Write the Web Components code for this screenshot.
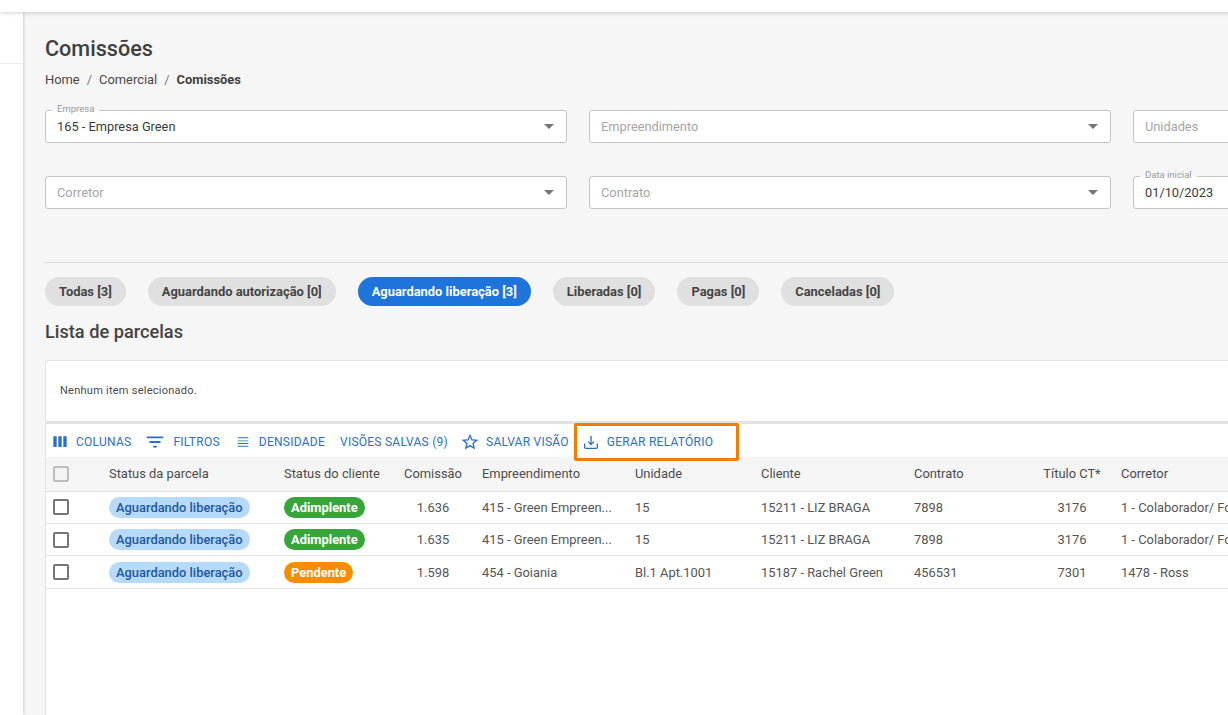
<!DOCTYPE html>
<html lang="pt-BR">
<head>
<meta charset="UTF-8">
<title>Comissões</title>
<style>
  html, body { margin: 0; height: 100%; overflow: hidden; background: #fff; font-family: Roboto, "Liberation Sans", sans-serif; color: #3f3f3f; }
  grid-row .c { width: 58px; text-align: center; }
</style>
</head>
<body>
<app-shell>
  <page-header title="Comissões"></page-header>
  <filter-grid>
    <form-field label="Empresa" value="165 - Empresa Green" arrow></form-field>
    <form-field placeholder="Empreendimento" arrow></form-field>
    <form-field placeholder="Unidades"></form-field>
    <form-field placeholder="Corretor" arrow></form-field>
    <form-field placeholder="Contrato" arrow></form-field>
    <form-field label="Data inicial" value="01/10/2023"></form-field>
  </filter-grid>
  <status-tabs>
    <status-chip>Todas [3]</status-chip>
    <status-chip>Aguardando autorização [0]</status-chip>
    <status-chip active>Aguardando liberação [3]</status-chip>
    <status-chip>Liberadas [0]</status-chip>
    <status-chip>Pagas [0]</status-chip>
    <status-chip>Canceladas [0]</status-chip>
  </status-tabs>
  <list-panel title="Lista de parcelas">
    <grid-toolbar slot="toolbar">
      <tool-button icon="columns">COLUNAS</tool-button>
      <tool-button icon="filter">FILTROS</tool-button>
      <tool-button icon="density" class="wider">DENSIDADE</tool-button>
      <tool-button class="plain">VISÕES SALVAS (9)</tool-button>
      <tool-button icon="star" class="tight">SALVAR VISÃO</tool-button>
      <tool-button icon="download" highlight>GERAR RELATÓRIO</tool-button>
    </grid-toolbar>
    <grid-row header>
      <span>Status da parcela</span><span>Status do cliente</span><span class="c">Comissão</span><span>Empreendimento</span><span>Unidade</span><span>Cliente</span><span>Contrato</span><span class="c">Título CT*</span><span>Corretor</span>
    </grid-row>
    <grid-row>
      <status-pill kind="info">Aguardando liberação</status-pill><status-pill kind="ok">Adimplente</status-pill><span class="c">1.636</span><span>415 - Green Empreen...</span><span>15</span><span>15211 - LIZ BRAGA</span><span>7898</span><span class="c">3176</span><span>1 - Colaborador/ Fornecedor</span>
    </grid-row>
    <grid-row>
      <status-pill kind="info">Aguardando liberação</status-pill><status-pill kind="ok">Adimplente</status-pill><span class="c">1.635</span><span>415 - Green Empreen...</span><span>15</span><span>15211 - LIZ BRAGA</span><span>7898</span><span class="c">3176</span><span>1 - Colaborador/ Fornecedor</span>
    </grid-row>
    <grid-row>
      <status-pill kind="info">Aguardando liberação</status-pill><status-pill kind="warn">Pendente</status-pill><span class="c">1.598</span><span>454 - Goiania</span><span>Bl.1 Apt.1001</span><span>15187 - Rachel Green</span><span>456531</span><span class="c">7301</span><span>1478 - Ross</span>
    </grid-row>
  </list-panel>
</app-shell>

<script>
  // size and gap to the label differ per icon
  const icons = {
    columns: { size: 20, gap: 6, d: '<path d="M10 18h4V5h-4v13zm-6 0h4V5H4v13zM16 5v13h4V5h-4z" fill="currentColor"/>' },
    filter: { size: 22, gap: 7, d: '<path d="M10 18h4v-2h-4v2zM3 6v2h18V6H3zm3 7h12v-2H6v2z" fill="currentColor"/>' },
    density: { size: 16, gap: 8, d: '<path d="M4 15h16v-1.4H4V15zm0 4h16v-1.4H4V19zm0-8h16V9.6H4V11zm0-6v1.4h16V5H4z" fill="currentColor"/>' },
    star: { size: 20, gap: 6, d: '<path d="M22 9.24l-7.19-.62L12 2 9.19 8.63 2 9.24l5.46 4.73L5.82 21 12 17.27 18.18 21l-1.63-7.03L22 9.24zM12 15.4l-3.76 2.27 1-4.28-3.32-2.88 4.38-.38L12 6.1l1.71 4.04 4.38.38-3.32 2.88 1 4.28L12 15.4z" fill="currentColor"/>' },
    download: { size: 18, gap: 7, d: '<path d="M3.5 14v5a1.5 1.5 0 0 0 1.5 1.5h14a1.5 1.5 0 0 0 1.5-1.5v-5M12 4v11M8 11.5l4 4 4-4" fill="none" stroke="currentColor" stroke-width="1.8"/>' }
  };

  function define(name, css, html) {
    class El extends HTMLElement {
      constructor() {
        super();
        this.attachShadow({ mode: 'open' });
      }
      connectedCallback() {
        this.shadowRoot.innerHTML = `<style>${css}</style>` + (typeof html === 'function' ? html(this) : html);
      }
    }
    customElements.define(name, El);
  }

  define('app-shell', `
    :host { display: grid; grid-template-columns: 23px 1fr; grid-template-rows: 12px 1fr; height: 715px; overflow: hidden; }
    .top { grid-column: 1 / 3; background: #fff; box-shadow: 0 1px 4px rgba(0,0,0,.18); position: relative; z-index: 2; }
    .side { background: #fff; box-shadow: 1px 0 3px rgba(0,0,0,.14); position: relative; z-index: 1; }
    .side div { height: 51px; border-bottom: 1px solid #ececec; }
    main { background: #f6f6f6; padding: 23px 0 0 22px; overflow: hidden; width: 1300px; }
  `, `<div class="top"></div><div class="side"><div></div></div><main><slot></slot></main>`);

  define('page-header', `
    :host { display: block; }
    h1 { margin: 0; font-size: 21.6px; line-height: 28px; font-weight: 500; color: #3f3f3f; }
    nav { margin-top: 9px; font-size: 12.9px; line-height: 16px; display: flex; gap: 7px; color: #484848; }
    b { font-weight: 700; color: #3f3f3f; }
    i { font-style: normal; color: #777; }
  `, el => `<h1>${el.getAttribute('title')}</h1>
    <nav><span>Home</span><i>/</i><span>Comercial</span><i>/</i><b>${el.getAttribute('title')}</b></nav>`);

  define('filter-grid', `
    :host { display: grid; grid-template-columns: repeat(3, 522px); column-gap: 22px; row-gap: 33px; margin-top: 22px; }
  `, `<slot></slot>`);

  define('form-field', `
    :host { display: flex; align-items: center; justify-content: space-between; position: relative; height: 33px; box-sizing: border-box; padding: 0 12px 0 11px; background: #fff; border: 1px solid #c4c4c4; border-radius: 3px; font-size: 12.8px; }
    .v { color: #3c3c3c; }
    .p { color: #a5a5a5; }
    label { position: absolute; left: 6px; top: -8px; padding: 0 5px; font-size: 9.5px; line-height: 11px; color: #9a9a9a; background: linear-gradient(#f6f6f6 7px, #fff 7px); }
    .arrow { width: 0; height: 0; border: 5px solid transparent; border-top-color: #757575; border-bottom: 0; }
  `, el => `${el.hasAttribute('label') ? `<label>${el.getAttribute('label')}</label>` : ''}
    ${el.hasAttribute('value') ? `<span class="v">${el.getAttribute('value')}</span>` : `<span class="p">${el.getAttribute('placeholder')}</span>`}
    ${el.hasAttribute('arrow') ? '<span class="arrow"></span>' : ''}`);

  define('status-tabs', `
    :host { display: flex; gap: 22px; width: 1300px; margin-top: 53px; padding-top: 14px; border-top: 1px solid #dcdcdc; }
  `, `<slot></slot>`);

  define('status-chip', `
    :host { display: block; height: 29px; line-height: 29px; padding: 0 14px; border-radius: 15px; background: #e0e0e0; color: #444; font-size: 12.92px; font-weight: 700; white-space: nowrap; }
    :host([active]) { background: #1f74db; color: #fff; }
  `, `<slot></slot>`);

  define('list-panel', `
    :host { display: block; }
    h2 { margin: 14px 0 16px; font-size: 18.2px; line-height: 24px; font-weight: 500; color: #444; }
    .notice { height: 62px; box-sizing: border-box; background: #fff; border: 1px solid #e2e2e2; border-right: 0; border-radius: 3px 0 0 3px; padding-left: 14px; font-size: 11px; letter-spacing: .25px; line-height: 59px; color: #4a4a4a; }
    .body { background: #fff; border-left: 1px solid #e2e2e2; border-top: 2px solid #e2e2e2; height: 292px; }
  `, el => `<h2>${el.getAttribute('title')}</h2>
    <div class="notice">Nenhum item selecionado.</div>
    <div class="body"><slot name="toolbar"></slot><slot></slot></div>`);

  define('grid-toolbar', `
    :host { display: flex; align-items: center; box-sizing: border-box; height: 33px; padding: 2px 0 0 4px; gap: 13px; }
    ::slotted(.wider) { margin-left: 2px; }
    ::slotted(.plain) { margin-left: 2px; }
    ::slotted(.tight) { margin-left: -1px; }
  `, `<slot></slot>`);

  define('tool-button', `
    :host { display: flex; align-items: center; gap: var(--gap, 0); position: relative; color: #2b6fcc; font-size: 12px; letter-spacing: .25px; white-space: nowrap; }
    svg { display: block; flex: none; }
    .hl { position: absolute; left: -8px; top: calc(50% - 18.5px); width: 165px; height: 38px; box-sizing: border-box; border: 3px solid #f57c00; border-radius: 2px; }
  `, el => {
    const icon = icons[el.getAttribute('icon')];
    if (icon) el.style.setProperty('--gap', icon.gap + 'px');
    return `${icon ? `<svg viewBox="0 0 24 24" width="${icon.size}" height="${icon.size}">${icon.d}</svg>` : ''}<slot></slot>${el.hasAttribute('highlight') ? '<span class="hl"></span>' : ''}`;
  });

  define('check-box', `
    :host { display: block; width: 16px; height: 16px; box-sizing: border-box; border: 2px solid #757575; border-radius: 2px; background: #fff; }
    :host([muted]) { border-color: #bdbdbd; background: #f4f4f4; }
  `, ``);

  define('status-pill', `
    :host { display: inline-block; justify-self: start; height: 21px; line-height: 21px; padding: 0 7px; border-radius: 11px; font-size: 12.9px; font-weight: 500; white-space: nowrap; }
    :host([kind=info]) { background: #b6dafc; color: #1f56a0; }
    :host([kind=ok]) { background: #38a53b; color: #fff; font-weight: 700; }
    :host([kind=warn]) { background: #fb8c00; color: #fff; font-weight: 700; }
  `, `<slot></slot>`);

  define('grid-row', `
    :host { display: grid; grid-template-columns: 63px 175px 120px 78px 153px 126px 153px 129px 78px 300px; align-items: center; height: 32.4px; box-sizing: border-box; border-bottom: 1px solid #e2e2e2; font-size: 12.9px; color: #555; width: 1300px; white-space: nowrap; }
    :host([header]) { height: 34.7px; background: #f5f5f5; color: #4c4c4c; }
    check-box { margin-left: 7px; }
  `, el => `<check-box ${el.hasAttribute('header') ? 'muted' : ''}></check-box><slot></slot>`);
</script>
</body>
</html>
